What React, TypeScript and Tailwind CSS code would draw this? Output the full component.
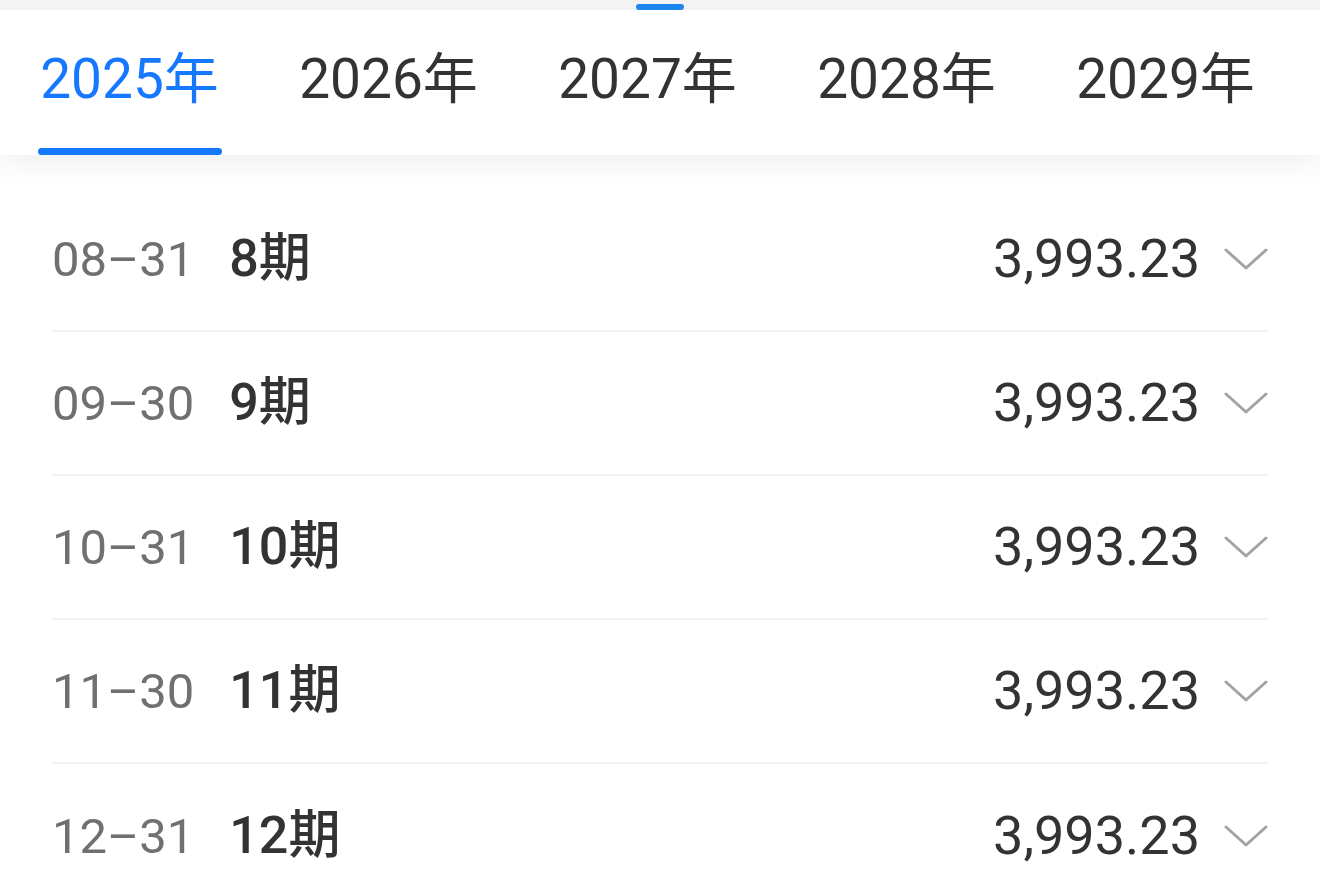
const years = ["2025年", "2026年", "2027年", "2028年", "2029年"];

const rows = [
  { date: "08–31", period: "8期", amount: "3,993.23" },
  { date: "09–30", period: "9期", amount: "3,993.23" },
  { date: "10–31", period: "10期", amount: "3,993.23" },
  { date: "11–30", period: "11期", amount: "3,993.23" },
  { date: "12–31", period: "12期", amount: "3,993.23" },
];

function Chevron() {
  return (
    <svg width="44" height="24" viewBox="0 0 44 24" fill="none" className="ml-[24px] shrink-0">
      <path d="M2 3 L22 21 L42 3" stroke="#a3a3a3" strokeWidth="3" strokeLinecap="round" strokeLinejoin="round" />
    </svg>
  );
}

export default function App() {
  const active = 0;
  return (
    <div className="w-[1320px] h-[875px] overflow-hidden bg-white font-['Roboto','Noto_Sans_CJK_SC',sans-serif]">
      <div className="h-[10px] bg-[#f5f5f5] flex justify-center">
        <div className="mt-[4px] h-[6px] w-[48px] rounded-full bg-[#1e88f0]" />
      </div>

      <div className="relative z-10 h-[145px] bg-white flex shadow-[0_10px_28px_rgba(0,0,0,0.06)]">
        {years.map((y, i) => (
          <div key={y} className="relative w-[259px] shrink-0 flex items-center justify-center pb-[6px]">
            <span className={`text-[55px] leading-none ${i === active ? "text-[#1677ff]" : "text-[#333333]"}`}>{y}</span>
            {i === active && (
              <div className="absolute bottom-0 left-1/2 -translate-x-1/2 h-[7px] w-[184px] rounded-full bg-[#1677ff]" />
            )}
          </div>
        ))}
      </div>

      <ul className="pt-[33px] px-[52px]">
        {rows.map((r, i) => (
          <li
            key={r.date}
            className={`h-[144px] flex items-center ${i < rows.length - 1 ? "border-b-2 border-[#f2f2f4]" : ""}`}
          >
            <span className="text-[49px] leading-none text-[#707070]">{r.date}</span>
            <span className="ml-[35px] text-[52px] leading-none font-medium text-[#333333]">{r.period}</span>
            <span className="ml-auto text-[54px] leading-none text-[#333333]">{r.amount}</span>
            <Chevron />
          </li>
        ))}
      </ul>
    </div>
  );
}
